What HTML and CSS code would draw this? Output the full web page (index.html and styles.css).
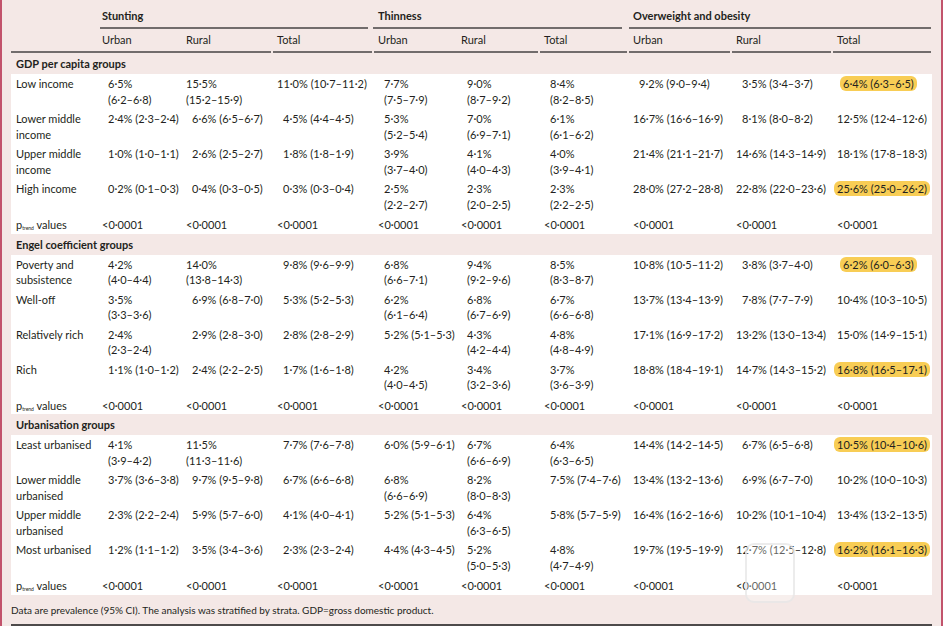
FILE: index.html
```html
<!DOCTYPE html>
<html lang="en">
<head>
<meta charset="utf-8">
<title>Prevalence table</title>
<link rel="stylesheet" href="styles.css">
</head>
<body>
<div class="page">
<table class="tbl">
<colgroup>
<col class="c-lab"><col class="c1"><col class="c2"><col class="c3"><col class="c4"><col class="c5"><col class="c6"><col class="c7"><col class="c8"><col class="c9">
</colgroup>
<thead>
<tr class="grp">
<th></th>
<th colspan="3"><div class="g g1">Stunting</div></th>
<th colspan="3"><div class="g g2">Thinness</div></th>
<th colspan="3"><div class="g g3">Overweight and obesity</div></th>
</tr>
<tr class="sub">
<th><div class="s">&nbsp;</div></th>
<th><div class="s">Urban</div></th>
<th><div class="s gr">Rural</div></th>
<th><div class="s gl gr">Total</div></th>
<th><div class="s gl">Urban</div></th>
<th><div class="s gr">Rural</div></th>
<th><div class="s gl gr">Total</div></th>
<th><div class="s gl gr">Urban</div></th>
<th><div class="s gl gr">Rural</div></th>
<th><div class="s gl sl">Total</div></th>
</tr>
</thead>
<tbody>
<tr class="band"><td colspan="10">GDP per capita groups</td></tr>
<tr>
<td class="lab">Low income</td>
<td class="i">6·5%<br>(6·2–6·8)</td>
<td>15·5%<br>(15·2–15·9)</td>
<td>11·0% (10·7–11·2)</td>
<td class="i">7·7%<br>(7·5–7·9)</td>
<td class="i">9·0%<br>(8·7–9·2)</td>
<td class="i">8·4%<br>(8·2–8·5)</td>
<td class="i">9·2% (9·0–9·4)</td>
<td class="i">3·5% (3·4–3·7)</td>
<td class="i"><span class="hl">6·4% (6·3–6·5)</span></td>
</tr>
<tr>
<td class="lab">Lower middle<br>income</td>
<td class="i">2·4% (2·3–2·4)</td>
<td class="i">6·6% (6·5–6·7)</td>
<td class="i">4·5% (4·4–4·5)</td>
<td class="i">5·3%<br>(5·2–5·4)</td>
<td class="i">7·0%<br>(6·9–7·1)</td>
<td class="i">6·1%<br>(6·1–6·2)</td>
<td>16·7% (16·6–16·9)</td>
<td class="i">8·1% (8·0–8·2)</td>
<td>12·5% (12·4–12·6)</td>
</tr>
<tr>
<td class="lab">Upper middle<br>income</td>
<td class="i">1·0% (1·0–1·1)</td>
<td class="i">2·6% (2·5–2·7)</td>
<td class="i">1·8% (1·8–1·9)</td>
<td class="i">3·9%<br>(3·7–4·0)</td>
<td class="i">4·1%<br>(4·0–4·3)</td>
<td class="i">4·0%<br>(3·9–4·1)</td>
<td>21·4% (21·1–21·7)</td>
<td>14·6% (14·3–14·9)</td>
<td>18·1% (17·8–18·3)</td>
</tr>
<tr>
<td class="lab">High income</td>
<td class="i">0·2% (0·1–0·3)</td>
<td class="i">0·4% (0·3–0·5)</td>
<td class="i">0·3% (0·3–0·4)</td>
<td class="i">2·5%<br>(2·2–2·7)</td>
<td class="i">2·3%<br>(2·0–2·5)</td>
<td class="i">2·3%<br>(2·2–2·5)</td>
<td>28·0% (27·2–28·8)</td>
<td>22·8% (22·0–23·6)</td>
<td><span class="hl">25·6% (25·0–26·2)</span></td>
</tr>
<tr class="pt">
<td class="lab">p<sub class="tr">trend</sub> values</td>
<td>&lt;0·0001</td><td>&lt;0·0001</td><td>&lt;0·0001</td><td>&lt;0·0001</td><td>&lt;0·0001</td><td>&lt;0·0001</td><td>&lt;0·0001</td><td>&lt;0·0001</td><td>&lt;0·0001</td>
</tr>
<tr class="band"><td colspan="10">Engel coefficient groups</td></tr>
<tr>
<td class="lab">Poverty and<br>subsistence</td>
<td class="i">4·2%<br>(4·0–4·4)</td>
<td>14·0%<br>(13·8–14·3)</td>
<td class="i">9·8% (9·6–9·9)</td>
<td class="i">6·8%<br>(6·6–7·1)</td>
<td class="i">9·4%<br>(9·2–9·6)</td>
<td class="i">8·5%<br>(8·3–8·7)</td>
<td>10·8% (10·5–11·2)</td>
<td class="i">3·8% (3·7–4·0)</td>
<td class="i"><span class="hl">6·2% (6·0–6·3)</span></td>
</tr>
<tr>
<td class="lab">Well-off</td>
<td class="i">3·5%<br>(3·3–3·6)</td>
<td class="i">6·9% (6·8–7·0)</td>
<td class="i">5·3% (5·2–5·3)</td>
<td class="i">6·2%<br>(6·1–6·4)</td>
<td class="i">6·8%<br>(6·7–6·9)</td>
<td class="i">6·7%<br>(6·6–6·8)</td>
<td>13·7% (13·4–13·9)</td>
<td class="i">7·8% (7·7–7·9)</td>
<td>10·4% (10·3–10·5)</td>
</tr>
<tr>
<td class="lab">Relatively rich</td>
<td class="i">2·4%<br>(2·3–2·4)</td>
<td class="i">2·9% (2·8–3·0)</td>
<td class="i">2·8% (2·8–2·9)</td>
<td class="i">5·2% (5·1–5·3)</td>
<td class="i">4·3%<br>(4·2–4·4)</td>
<td class="i">4·8%<br>(4·8–4·9)</td>
<td>17·1% (16·9–17·2)</td>
<td>13·2% (13·0–13·4)</td>
<td>15·0% (14·9–15·1)</td>
</tr>
<tr>
<td class="lab">Rich</td>
<td class="i">1·1% (1·0–1·2)</td>
<td class="i">2·4% (2·2–2·5)</td>
<td class="i">1·7% (1·6–1·8)</td>
<td class="i">4·2%<br>(4·0–4·5)</td>
<td class="i">3·4%<br>(3·2–3·6)</td>
<td class="i">3·7%<br>(3·6–3·9)</td>
<td>18·8% (18·4–19·1)</td>
<td>14·7% (14·3–15·2)</td>
<td><span class="hl">16·8% (16·5–17·1)</span></td>
</tr>
<tr class="pt">
<td class="lab">p<sub class="tr">trend</sub> values</td>
<td>&lt;0·0001</td><td>&lt;0·0001</td><td>&lt;0·0001</td><td>&lt;0·0001</td><td>&lt;0·0001</td><td>&lt;0·0001</td><td>&lt;0·0001</td><td>&lt;0·0001</td><td>&lt;0·0001</td>
</tr>
<tr class="band"><td colspan="10">Urbanisation groups</td></tr>
<tr>
<td class="lab">Least urbanised</td>
<td class="i">4·1%<br>(3·9–4·2)</td>
<td>11·5%<br>(11·3–11·6)</td>
<td class="i">7·7% (7·6–7·8)</td>
<td class="i">6·0% (5·9–6·1)</td>
<td class="i">6·7%<br>(6·6–6·9)</td>
<td class="i">6·4%<br>(6·3–6·5)</td>
<td>14·4% (14·2–14·5)</td>
<td class="i">6·7% (6·5–6·8)</td>
<td><span class="hl">10·5% (10·4–10·6)</span></td>
</tr>
<tr>
<td class="lab">Lower middle<br>urbanised</td>
<td class="i">3·7% (3·6–3·8)</td>
<td class="i">9·7% (9·5–9·8)</td>
<td class="i">6·7% (6·6–6·8)</td>
<td class="i">6·8%<br>(6·6–6·9)</td>
<td class="i">8·2%<br>(8·0–8·3)</td>
<td class="i">7·5% (7·4–7·6)</td>
<td>13·4% (13·2–13·6)</td>
<td class="i">6·9% (6·7–7·0)</td>
<td>10·2% (10·0–10·3)</td>
</tr>
<tr>
<td class="lab">Upper middle<br>urbanised</td>
<td class="i">2·3% (2·2–2·4)</td>
<td class="i">5·9% (5·7–6·0)</td>
<td class="i">4·1% (4·0–4·1)</td>
<td class="i">5·2% (5·1–5·3)</td>
<td class="i">6·4%<br>(6·3–6·5)</td>
<td class="i">5·8% (5·7–5·9)</td>
<td>16·4% (16·2–16·6)</td>
<td>10·2% (10·1–10·4)</td>
<td>13·4% (13·2–13·5)</td>
</tr>
<tr>
<td class="lab">Most urbanised</td>
<td class="i">1·2% (1·1–1·2)</td>
<td class="i">3·5% (3·4–3·6)</td>
<td class="i">2·3% (2·3–2·4)</td>
<td class="i">4·4% (4·3–4·5)</td>
<td class="i">5·2%<br>(5·0–5·3)</td>
<td class="i">4·8%<br>(4·7–4·9)</td>
<td>19·7% (19·5–19·9)</td>
<td>12·7% (12·5–12·8)</td>
<td><span class="hl">16·2% (16·1–16·3)</span></td>
</tr>
<tr class="pt">
<td class="lab">p<sub class="tr">trend</sub> values</td>
<td>&lt;0·0001</td><td>&lt;0·0001</td><td>&lt;0·0001</td><td>&lt;0·0001</td><td>&lt;0·0001</td><td>&lt;0·0001</td><td>&lt;0·0001</td><td>&lt;0·0001</td><td>&lt;0·0001</td>
</tr>
</tbody>
</table>
<p class="note">Data are prevalence (95% CI). The analysis was stratified by strata. GDP=gross domestic product.</p>
<div class="wm" aria-hidden="true"></div>
</div>
</body>
</html>
```

FILE: styles.css
```css
* { box-sizing: border-box; }
html, body { margin: 0; padding: 0; }
body {
  width: 943px;
  height: 626px;
  overflow: hidden;
  background: #f4e8e6;
  border-left: 2px solid #c2536c;
  border-right: 2px solid #c2536c;
  font-family: Lato, "Noto Sans", sans-serif;
  color: #231f20;
}
.page {
  position: relative;
  margin-left: 9px;
  width: 921px;
  height: 626px;
}
.tbl {
  width: 921px;
  table-layout: fixed;
  border-collapse: separate;
  border-spacing: 0;
  font-size: 11px;
}
.c-lab { width: 91px; }
.c1 { width: 84px; }
.c2 { width: 91px; }
.c3 { width: 101px; }
.c4 { width: 83px; }
.c5 { width: 83px; }
.c6 { width: 89px; }
.c7 { width: 103px; }
.c8 { width: 101px; }
.c9 { width: 95px; }

th { padding: 0; text-align: left; font-weight: normal; }
.grp th { vertical-align: bottom; }
.g {
  font-weight: 700;
  line-height: 16px;
  padding-top: 8px;
  padding-bottom: 3px;
  border-bottom: 2px solid #716c6c;
}
.g1 { margin-left: -2px; padding-left: 2px; margin-right: 10px; }
.g2 { margin-left: -5px; padding-left: 5px; margin-right: 11px; }
.g3 { margin-left: -4px; padding-left: 4px; margin-right: 1px; }
.s {
  line-height: 16px;
  padding: 3px 0 3px 0;
  border-bottom: 2px solid #716c6c;
}
.gr { margin-right: 6px; }
.gl { margin-left: -4px; padding-left: 4px; }
.sl { margin-right: 1px; }

td {
  padding: 2px 0 2px 0;
  line-height: 15.5px;
  vertical-align: top;
  white-space: nowrap;
  background: #fff;
}
td.i { padding-left: 6px; }
td.lab { padding-left: 5px; }
.pt td { padding-top: 3px; padding-bottom: 1px; }
.band td {
  background: transparent;
  font-weight: 700;
  line-height: 16px;
  padding: 3px 5px 2px;
}
.tr {
  font-size: 5px;
  line-height: 0;
  vertical-align: -1px;
}
.hl {
  background: #f8cd55;
  border-radius: 6px;
  padding: 1px 3px;
  margin-left: -3px;
}
.note {
  margin: 0;
  font-size: 10px;
  line-height: 14px;
  padding: 8px 0 7px 0;
  border-bottom: 2px solid #4d4a4a;
}
.wm {
  position: absolute;
  left: 734px;
  top: 543px;
  width: 50px;
  height: 60px;
  border: 2px solid rgba(228, 228, 228, 0.7);
  border-radius: 9px;
  background: rgba(255, 255, 255, 0.3);
  pointer-events: none;
}
```
